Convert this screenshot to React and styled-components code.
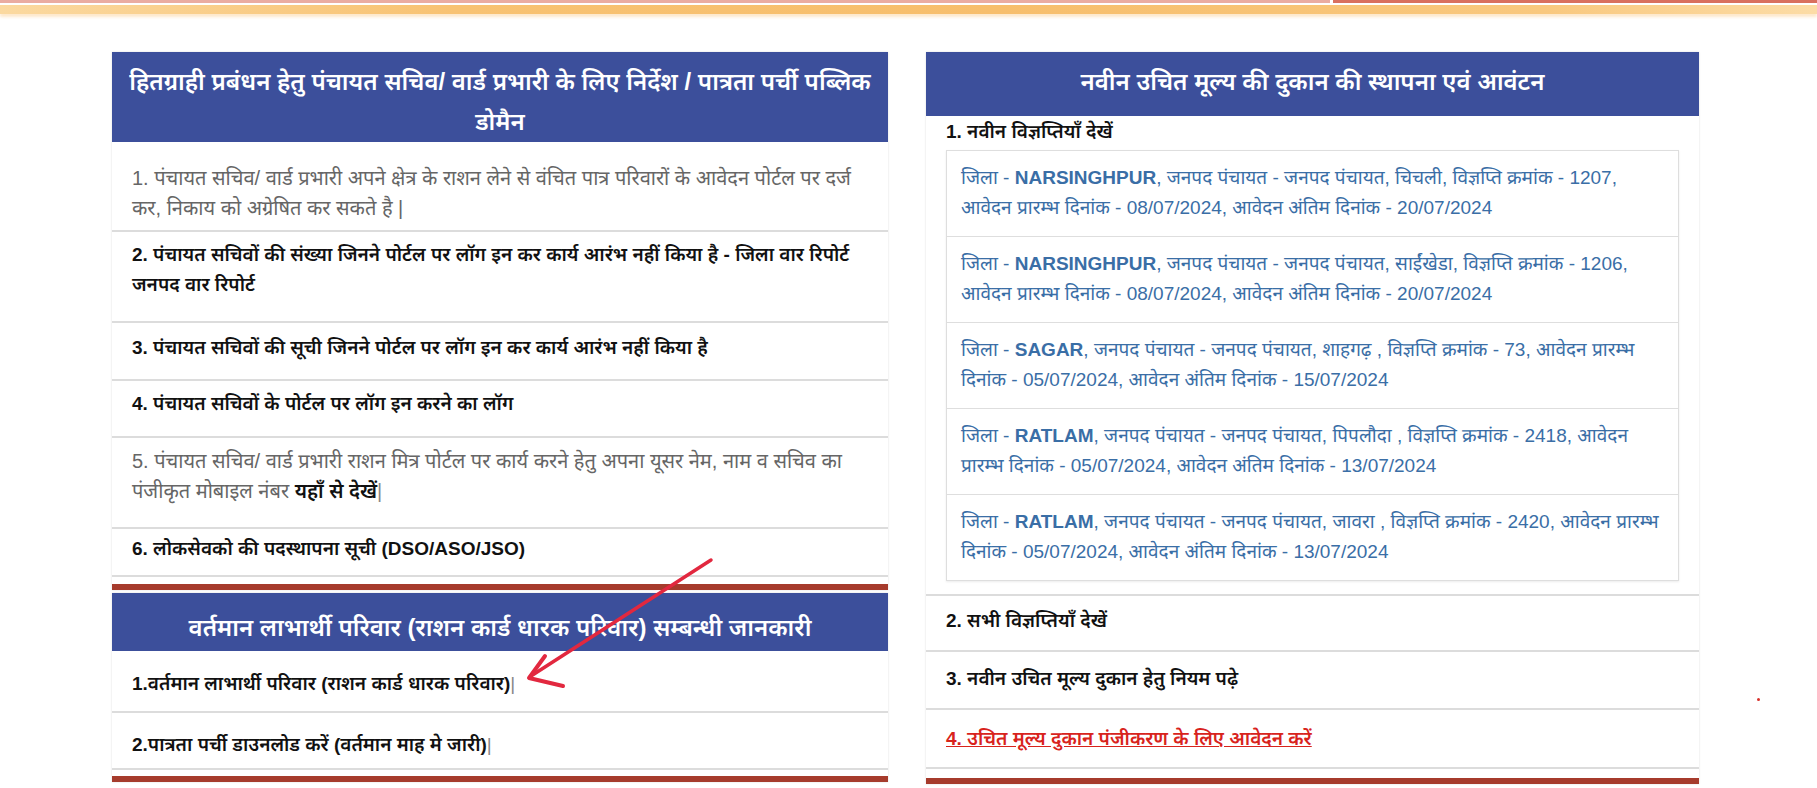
import React from 'react'
import styled, { createGlobalStyle } from 'styled-components'

const GlobalStyle = createGlobalStyle`
  html, body {
    margin: 0;
    padding: 0;
    background: #fff;
  }
  body {
    font-family: "Liberation Sans", "Noto Sans Devanagari", "Noto Sans", sans-serif;
  }
`

const Page = styled.div`
  position: relative;
  width: 1817px;
  height: 788px;
  overflow: hidden;
  background: #fff;
`

const TopStrip = styled.div`
  display: flex;
  height: 3px;
`
const StripPart = styled.div`
  width: ${p => p.$w || 'auto'};
  flex: ${p => (p.$w ? 'none' : '1')};
  background: ${p => p.$color};
`

const Band = styled.div`
  height: 9px;
  margin-top: 2px;
  background: linear-gradient(to right, #fbd9a0 0%, #f8c272 25%, #f7be6c 55%, #f9c87e 85%, #fcdca6 100%);
  box-shadow: 0 3px 3px rgba(250, 205, 140, 0.45);
`

const Columns = styled.div`
  display: flex;
  align-items: flex-start;
  gap: 38px;
  padding: 38px 0 0 112px;
`

const Column = styled.div`
  width: ${p => p.$w}px;
  display: flex;
  flex-direction: column;
  gap: 3px;
`

const Panel = styled.div`
  background: #fff;
  box-shadow: 0 0 2px rgba(0, 0, 0, 0.14);
  border-bottom: 6px solid #a63b2c;
  padding-bottom: ${p => p.$pb}px;
`

const Header = styled.div`
  background: #3c4f9b;
  color: #fff;
  text-align: center;
  font-size: 24px;
  line-height: 40px;
  font-weight: 600;
  padding: ${p => p.$pad};
`

const Row = styled.div`
  padding: ${p => p.$pt ?? 8}px 20px ${p => p.$pb ?? 17}px;
  border-bottom: 2px solid #dcdcdc;
  line-height: 30px;
  color: ${p => (p.$muted ? '#666' : '#111')};
  font-size: ${p => (p.$muted ? 20 : 19)}px;
  font-weight: ${p => (p.$muted ? 400 : 600)};
`

const Strong = styled.b`
  color: #111;
  font-weight: 600;
`

const Pipe = styled.span`
  color: #888;
  font-weight: 400;
`

const RedLink = styled.a`
  color: #d8231c;
  text-decoration: underline;
  font-weight: 600;
`

const NoticeList = styled.div`
  margin-top: 3px;
  border: 1px solid #dedede;
  box-shadow: 0 1px 2px rgba(0, 0, 0, 0.08);
`

const Notice = styled.div`
  padding: 12px 8px 13px 14px;
  border-bottom: 1px solid #dedede;
  color: #3a6ea6;
  font-size: 19px;
  line-height: 30px;
  font-weight: 400;

  &:last-child {
    border-bottom: none;
  }

  b {
    font-weight: 700;
  }
`

const Dot = styled.div`
  position: absolute;
  left: 1757px;
  top: 698px;
  width: 3px;
  height: 3px;
  border-radius: 50%;
  background: #d8312a;
`

const ArrowSvg = styled.svg`
  position: absolute;
  left: 0;
  top: 0;
  pointer-events: none;
`

const notices = [
  { district: 'NARSINGHPUR', place: 'चिचली', no: '1207', start: '08/07/2024', end: '20/07/2024', br: true },
  { district: 'NARSINGHPUR', place: 'साईंखेडा', no: '1206', start: '08/07/2024', end: '20/07/2024', br: true },
  { district: 'SAGAR', place: 'शाहगढ़ ', no: '73', start: '05/07/2024', end: '15/07/2024' },
  { district: 'RATLAM', place: 'पिपलौदा ', no: '2418', start: '05/07/2024', end: '13/07/2024' },
  { district: 'RATLAM', place: 'जावरा ', no: '2420', start: '05/07/2024', end: '13/07/2024' },
]

export default function App() {
  return (
    <Page>
      <GlobalStyle />
      <TopStrip>
        <StripPart $w="1330px" $color="#eaaca2" />
        <StripPart $w="3px" $color="#fff" />
        <StripPart $color="#d9705f" />
      </TopStrip>
      <Band />

      <Columns>
        <Column $w={776}>
          <Panel $pb={7}>
            <Header $pad="10px 8px 0">
              हितग्राही प्रबंधन हेतु पंचायत सचिव/ वार्ड प्रभारी के लिए निर्देश / पात्रता पर्ची पब्लिक डोमैन
            </Header>
            <Row $muted $pt={21} $pb={7}>
              1. पंचायत सचिव/ वार्ड प्रभारी अपने क्षेत्र के राशन लेने से वंचित पात्र परिवारों के आवेदन पोर्टल पर दर्ज कर, निकाय को अग्रेषित कर सकते है |
            </Row>
            <Row $pb={21}>
              2. पंचायत सचिवों की संख्या जिनने पोर्टल पर लॉग इन कर कार्य आरंभ नहीं किया है - जिला वार रिपोर्ट
              <br />
              जनपद वार रिपोर्ट
            </Row>
            <Row $pt={10} $pb={16}>
              3. पंचायत सचिवों की सूची जिनने पोर्टल पर लॉग इन कर कार्य आरंभ नहीं किया है
            </Row>
            <Row>4. पंचायत सचिवों के पोर्टल पर लॉग इन करने का लॉग</Row>
            <Row $muted $pb={21}>
              5. पंचायत सचिव/ वार्ड प्रभारी राशन मित्र पोर्टल पर कार्य करने हेतु अपना यूसर नेम, नाम व सचिव का पंजीकृत मोबाइल नंबर <Strong>यहाँ से देखें</Strong><Pipe>|</Pipe>
            </Row>
            <Row $pt={5} $pb={11}>
              6. लोकसेवको की पदस्थापना सूची (DSO/ASO/JSO)
            </Row>
          </Panel>

          <Panel $pb={6}>
            <Header $pad="15px 8px 3px">
              वर्तमान लाभार्थी परिवार (राशन कार्ड धारक परिवार) सम्बन्धी जानकारी
            </Header>
            <Row $pt={18} $pb={12}>
              1.वर्तमान लाभार्थी परिवार (राशन कार्ड धारक परिवार)<Pipe>|</Pipe>
            </Row>
            <Row $pt={17} $pb={8}>
              2.पात्रता पर्ची डाउनलोड करें (वर्तमान माह मे जारी)<Pipe>|</Pipe>
            </Row>
          </Panel>
        </Column>

        <Column $w={773}>
          <Panel $pb={9}>
            <Header $pad="10px 8px 14px">नवीन उचित मूल्य की दुकान की स्थापना एवं आवंटन</Header>
            <Row $pt={1} $pb={13}>
              1. नवीन विज्ञप्तियाँ देखें
              <NoticeList>
                {notices.map((n, i) => (
                  <Notice key={i}>
                    जिला - <b>{n.district}</b>, जनपद पंचायत - जनपद पंचायत, {n.place}, विज्ञप्ति क्रमांक - {n.no},
                    {n.br ? <br /> : ' '}
                    आवेदन प्रारम्भ दिनांक - {n.start}, आवेदन अंतिम दिनांक - {n.end}
                  </Notice>
                ))}
              </NoticeList>
            </Row>
            <Row $pt={10} $pb={14}>2. सभी विज्ञप्तियाँ देखें</Row>
            <Row $pt={12} $pb={14}>3. नवीन उचित मूल्य दुकान हेतु नियम पढ़े</Row>
            <Row $pt={14} $pb={13}>
              <RedLink>4. उचित मूल्य दुकान पंजीकरण के लिए आवेदन करें</RedLink>
            </Row>
          </Panel>
        </Column>
      </Columns>

      <Dot />
      <ArrowSvg width="1817" height="788" viewBox="0 0 1817 788">
        <line x1="711" y1="560" x2="531" y2="676" stroke="#e2283f" strokeWidth="3.5" strokeLinecap="round" />
        <polyline points="545,656 529,678 563,686" fill="none" stroke="#e2283f" strokeWidth="4" strokeLinecap="round" strokeLinejoin="round" />
      </ArrowSvg>
    </Page>
  )
}
